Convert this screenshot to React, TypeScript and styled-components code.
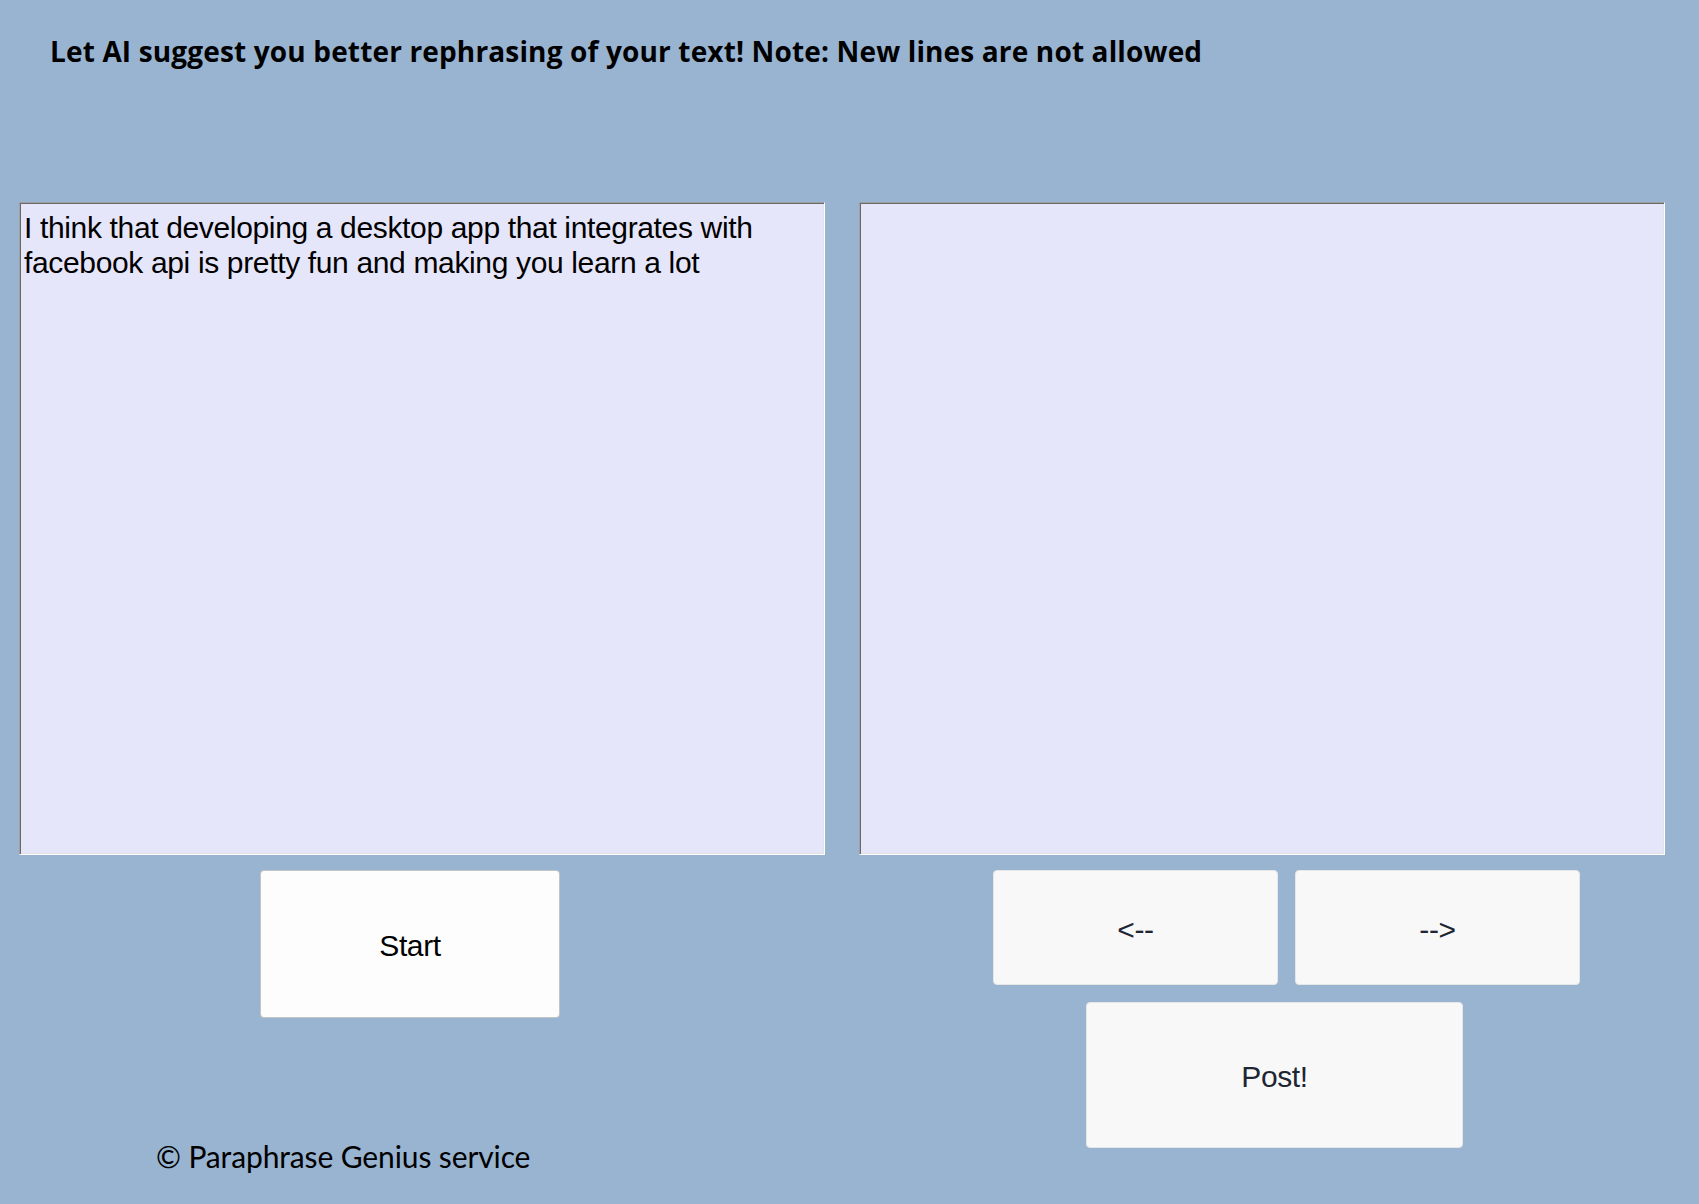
import styled, { createGlobalStyle } from 'styled-components';

const GlobalStyle = createGlobalStyle`
  html, body {
    margin: 0;
    padding: 0;
    background-color: #99b4d1;
  }
  * {
    box-sizing: border-box;
  }
`;

export const Page = styled.div`
  min-height: 100vh;
  padding: 34px 19px 0 19px;
  background-color: #99b4d1;
  font-family: "Liberation Sans", Arial, sans-serif;
  color: #000;
`;

export const Title = styled.h1`
  margin: 0 0 0 31px;
  font-family: "Open Sans", Lato, sans-serif;
  font-weight: 700;
  font-size: 28px;
  line-height: 34px;
  letter-spacing: 0.15px;
  white-space: nowrap;
`;

export const Columns = styled.div`
  display: grid;
  grid-template-columns: 806px 806px;
  column-gap: 34px;
  margin-top: 134px;
`;

export const Column = styled.div`
  display: flex;
  flex-direction: column;
`;

export const TextPane = styled.textarea`
  display: block;
  width: 100%;
  height: 653px;
  margin: 0;
  padding: 7px 3px 5px 4px;
  resize: none;
  overflow: hidden;
  background-color: #e6e6fa;
  border: 1px solid;
  border-color: #a0a0a0 #ffffff #ffffff #a0a0a0;
  box-shadow: inset 1px 1px 0 #696969, inset -1px -1px 0 #e3e3e3;
  border-radius: 0;
  outline: none;
  font-family: "Liberation Sans", Arial, sans-serif;
  font-size: 30px;
  line-height: 35px;
  letter-spacing: -0.35px;
  color: #000;
`;

export const Controls = styled.div<{ $indent: number }>`
  display: flex;
  flex-direction: column;
  align-items: flex-start;
  gap: 17px;
  margin-top: 15px;
  padding-left: ${(p) => p.$indent}px;
`;

export const ButtonRow = styled.div`
  display: flex;
  gap: 17px;
`;

export const Button = styled.button<{ $w: number; $h: number; $primary?: boolean }>`
  display: flex;
  align-items: center;
  justify-content: center;
  width: ${(p) => p.$w}px;
  height: ${(p) => p.$h}px;
  margin: 0;
  padding: 4px 0 0 0;
  border-radius: 4px;
  border: 1px solid ${(p) => (p.$primary ? '#c4c4c4' : '#e6e6e6')};
  background-color: ${(p) => (p.$primary ? '#fdfdfd' : '#f8f8f8')};
  color: ${(p) => (p.$primary ? '#000' : '#1e2633')};
  font-family: "Liberation Sans", Arial, sans-serif;
  font-size: 30px;
  letter-spacing: -0.4px;
  cursor: pointer;
`;

export const PostButton = styled(Button)`
  margin-left: 93px;
`;

export const Footer = styled.div`
  margin: 121px 0 0 137px;
  font-family: Lato, "Open Sans", sans-serif;
  font-size: 30px;
  line-height: 35px;
  letter-spacing: -0.12px;
  color: #000;
`;

export default function App() {
  return (
    <Page>
      <GlobalStyle />
      <Title>Let AI suggest you better rephrasing of your text! Note: New lines are not allowed</Title>
      <Columns>
        <Column>
          <TextPane
            defaultValue="I think that developing a desktop app that integrates with facebook api is pretty fun and making you learn a lot"
            spellCheck={false}
          />
          <Controls $indent={241}>
            <Button $w={300} $h={148} $primary>Start</Button>
          </Controls>
          <Footer>© Paraphrase Genius service</Footer>
        </Column>
        <Column>
          <TextPane defaultValue="" spellCheck={false} />
          <Controls $indent={134}>
            <ButtonRow>
              <Button $w={285} $h={115}>&lt;--</Button>
              <Button $w={285} $h={115}>--&gt;</Button>
            </ButtonRow>
            <PostButton $w={377} $h={146}>Post!</PostButton>
          </Controls>
        </Column>
      </Columns>
    </Page>
  );
}
